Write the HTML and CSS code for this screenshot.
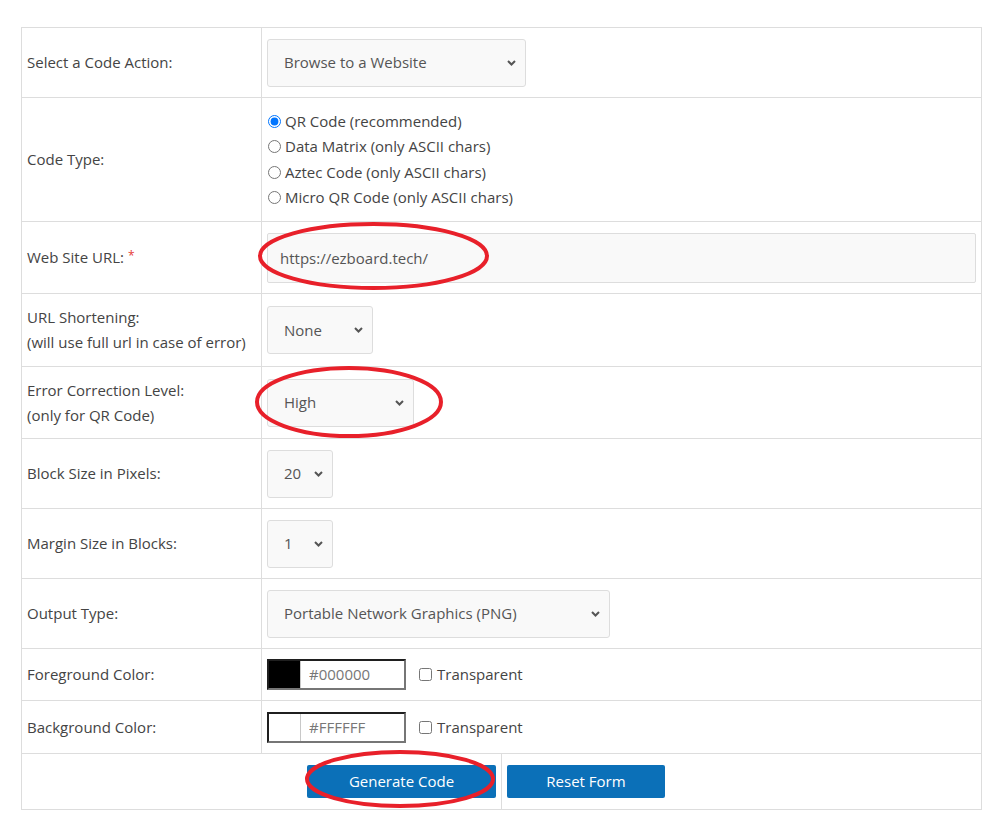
FILE: index.html
```html
<!DOCTYPE html>
<html lang="en">
<head>
<meta charset="utf-8">
<title>Code Generator</title>
<link rel="stylesheet" href="styles.css">
</head>
<body>
<div class="page">
  <form class="qr-form">
    <table class="form-table">
      <colgroup><col class="c-label"><col class="c-field"></colgroup>
      <tr class="h70">
        <td class="label">Select a Code Action:</td>
        <td><select class="sel w-action"><option>Browse to a Website</option></select></td>
      </tr>
      <tr class="h124">
        <td class="label">Code Type:</td>
        <td>
          <label class="radio"><input type="radio" name="ct" checked> QR Code (recommended)</label>
          <label class="radio"><input type="radio" name="ct"> Data Matrix (only ASCII chars)</label>
          <label class="radio"><input type="radio" name="ct"> Aztec Code (only ASCII chars)</label>
          <label class="radio"><input type="radio" name="ct"> Micro QR Code (only ASCII chars)</label>
        </td>
      </tr>
      <tr class="h72">
        <td class="label">Web Site URL: <span class="req">*</span></td>
        <td><input class="txt" type="text" value="https://ezboard.tech/"></td>
      </tr>
      <tr class="h73">
        <td class="label">URL Shortening:<br>(will use full url in case of error)</td>
        <td><select class="sel w-none"><option>None</option></select></td>
      </tr>
      <tr class="h72">
        <td class="label">Error Correction Level:<br>(only for QR Code)</td>
        <td><select class="sel w-high"><option>High</option></select></td>
      </tr>
      <tr class="h70">
        <td class="label">Block Size in Pixels:</td>
        <td><select class="sel w-num"><option>20</option></select></td>
      </tr>
      <tr class="h70">
        <td class="label">Margin Size in Blocks:</td>
        <td><select class="sel w-num"><option>1</option></select></td>
      </tr>
      <tr class="h70">
        <td class="label">Output Type:</td>
        <td><select class="sel w-png"><option>Portable Network Graphics (PNG)</option></select></td>
      </tr>
      <tr class="h52">
        <td class="label">Foreground Color:</td>
        <td>
          <div class="color-row">
            <span class="color-field"><span class="swatch swatch-black"></span><input class="hex" type="text" value="#000000"></span>
            <label class="check"><input type="checkbox"> Transparent</label>
          </div>
        </td>
      </tr>
      <tr class="h53">
        <td class="label">Background Color:</td>
        <td>
          <div class="color-row">
            <span class="color-field"><span class="swatch swatch-white"></span><input class="hex" type="text" value="#FFFFFF"></span>
            <label class="check"><input type="checkbox"> Transparent</label>
          </div>
        </td>
      </tr>
      <tr class="h56">
        <td colspan="2" class="actions-cell">
          <div class="actions">
            <div class="act-left"><button type="button" class="btn w-gen">Generate Code</button></div>
            <div class="act-right"><button type="reset" class="btn w-reset">Reset Form</button></div>
          </div>
        </td>
      </tr>
    </table>
  </form>
  <svg class="marks" width="992" height="839" viewBox="0 0 992 839" aria-hidden="true">
    <ellipse cx="373.5" cy="256" rx="113.5" ry="32" />
    <ellipse cx="349" cy="402" rx="92" ry="34" />
    <ellipse cx="400" cy="779" rx="93" ry="27" />
  </svg>
</div>
</body>
</html>
```
FILE: styles.css
```css
* { box-sizing: border-box; }
html, body { margin: 0; background: #fff; }
body {
  font-family: "Open Sans", "Liberation Sans", sans-serif;
  font-size: 15px;
  color: #444;
}
.page {
  position: relative;
  padding: 27px 10px 30px 21px;
}
.form-table {
  border-collapse: collapse;
  table-layout: fixed;
  width: 961px;
}
.c-label { width: 240px; }
.form-table td {
  border: 1px solid #ddd;
  padding: 0 5px;
  vertical-align: middle;
  line-height: 25px;
}
.h70 td { height: 70px; }
.h124 td { height: 124px; }
.h72 td { height: 72px; }
.h73 td { height: 73px; }
.h52 td { height: 52px; }
.h53 td { height: 53px; }
.h56 td { height: 56px; }
.label { color: #444; }
.req {
  color: #e53935;
  font-size: 12px;
  position: relative;
  top: -3px;
}
.sel {
  appearance: none;
  -webkit-appearance: none;
  display: block;
  height: 48px;
  border: 1px solid #ddd;
  border-radius: 3px;
  background: #f9f9f9 url("data:image/svg+xml,%3Csvg xmlns='http://www.w3.org/2000/svg' width='9' height='6' viewBox='0 0 9 6'%3E%3Cpath d='M1 1l3.5 3.5L8 1' fill='none' stroke='%23555' stroke-width='2'/%3E%3C/svg%3E") no-repeat right 9px center;
  padding: 0 26px 0 16px;
  font: inherit;
  color: #555;
  outline: none;
}
.w-action { width: 259px; }
.w-none { width: 106px; }
.w-high { width: 147px; }
.w-num { width: 66px; }
.w-png { width: 343px; }
.txt {
  display: block;
  width: 709px;
  height: 50px;
  border: 1px solid #ddd;
  border-radius: 2px;
  background: #f9f9f9;
  padding: 0 12px;
  font: inherit;
  color: #555;
  outline: none;
}
.radio {
  display: flex;
  align-items: center;
  height: 25.5px;
  color: #444;
}
.radio input {
  margin: 0 4px 0 1px;
  width: 13px;
  height: 13px;
  accent-color: #0075ff;
}
.color-row {
  display: flex;
  align-items: center;
}
.color-field {
  display: flex;
  width: 139px;
  height: 31px;
  border: 2px solid;
  border-color: #1f1f1f #767676 #767676 #1f1f1f;
  background: #fff;
}
.swatch {
  width: 32px;
  height: 100%;
  border-right: 1px solid #c8c8c8;
  flex: none;
}
.swatch-black { background: #000; }
.swatch-white { background: #fff; }
.hex {
  border: 0;
  padding: 0 0 0 8px;
  width: 100%;
  font: inherit;
  color: #777;
  background: transparent;
  outline: none;
  min-width: 0;
}
.check {
  display: flex;
  align-items: center;
  margin-left: 13px;
  color: #444;
}
.check input {
  margin: 0 5px 0 0;
  width: 13px;
  height: 13px;
}
.actions-cell { padding: 0 !important; }
.actions {
  display: grid;
  grid-template-columns: 479px 1fr;
  height: 100%;
}
.act-left {
  display: flex;
  justify-content: flex-end;
  align-items: center;
  padding: 0 5px;
}
.act-right {
  display: flex;
  align-items: center;
  padding: 0 5px;
  border-left: 1px solid #ddd;
  height: 55px;
}
.btn {
  height: 33px;
  border: 0;
  border-radius: 2px;
  background: #0b70b8;
  color: #fff;
  font: inherit;
  cursor: pointer;
}
.w-gen { width: 189px; }
.w-reset { width: 158px; }
.marks {
  position: absolute;
  left: 0;
  top: 0;
  pointer-events: none;
}
.marks ellipse {
  fill: none;
  stroke: #e8202a;
  stroke-width: 4;
}
```
